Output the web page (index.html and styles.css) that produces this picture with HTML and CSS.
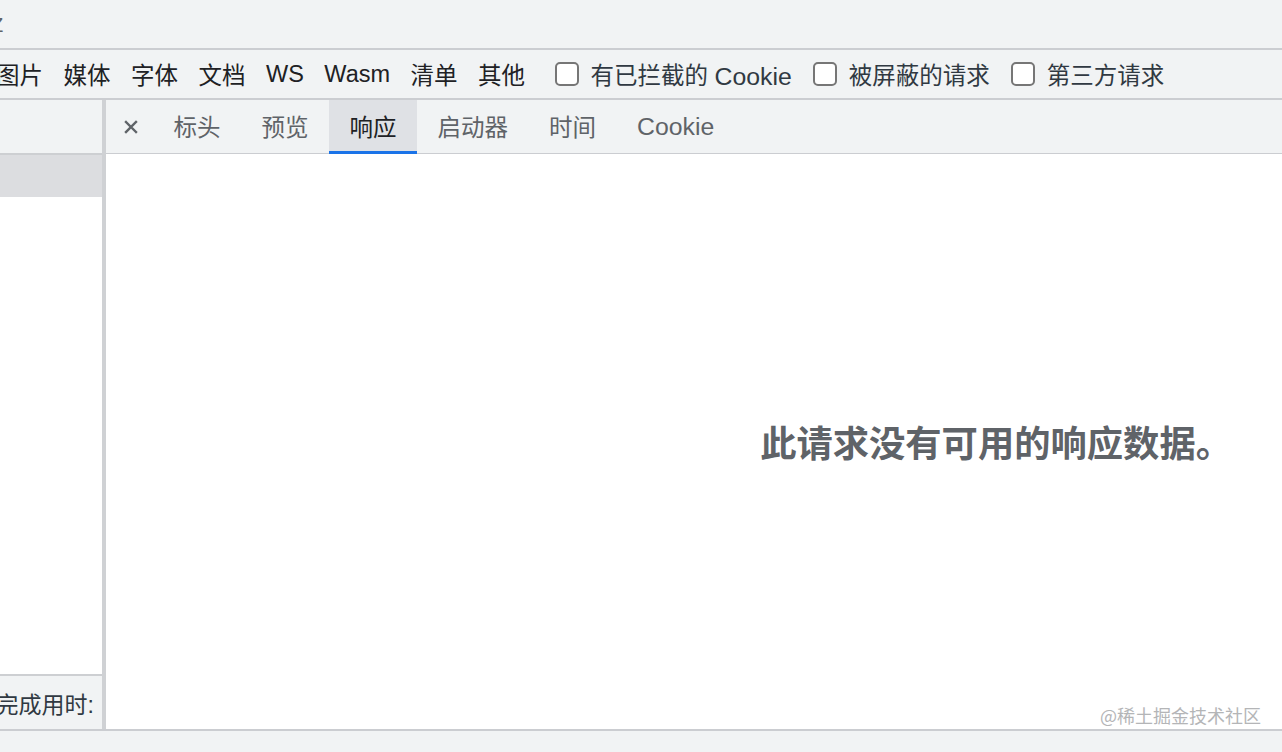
FILE: index.html
```html
<!DOCTYPE html>
<html lang="zh-CN">
<head>
<meta charset="utf-8">
<title>Network</title>
<link rel="stylesheet" href="styles.css">
</head>
<body>
<div class="topbar"><span class="cut">Z</span></div>
<div class="filters">
  <span class="f first">图片</span>
  <span class="f">媒体</span>
  <span class="f">字体</span>
  <span class="f">文档</span>
  <span class="f">WS</span>
  <span class="f">Wasm</span>
  <span class="f">清单</span>
  <span class="f">其他</span>
  <label class="chk"><span class="box"></span><span>有已拦截的 <span class="lat">Cookie</span></span></label>
  <label class="chk"><span class="box"></span><span>被屏蔽的请求</span></label>
  <label class="chk"><span class="box"></span><span>第三方请求</span></label>
</div>
<div class="main">
  <div class="left">
    <div class="left-head"></div>
    <div class="left-sel"></div>
    <div class="left-body"></div>
    <div class="left-foot"><span>完成用时:</span></div>
  </div>
  <div class="right">
    <div class="tabs">
      <span class="close">
        <svg width="14" height="14" viewBox="0 0 14 14"><path d="M2 2L12 12M12 2L2 12" stroke="#5f6368" stroke-width="2.4" stroke-linecap="square"/></svg>
      </span>
      <span class="tab">标头</span>
      <span class="tab">预览</span>
      <span class="tab active">响应</span>
      <span class="tab">启动器</span>
      <span class="tab">时间</span>
      <span class="tab"><span class="lat">Cookie</span></span>
    </div>
    <div class="content">
      <div class="msg">此请求没有可用的响应数据。</div>
      <div class="mark">@稀土掘金技术社区</div>
    </div>
  </div>
</div>
<div class="bottombar"></div>
</body>
</html>
```
FILE: styles.css
```css
html, body {
  margin: 0;
  padding: 0;
}
body {
  width: 1282px;
  height: 752px;
  overflow: hidden;
  background: #f1f3f4;
  font-family: "Liberation Sans", "Noto Sans CJK SC", sans-serif;
  color: #303942;
}
.topbar {
  height: 48px;
  border-bottom: 2px solid #cbcdd1;
  display: flex;
  align-items: center;
  overflow: hidden;
}
.cut {
  font-size: 20px;
  color: #5f6368;
  margin-left: -9px;
  margin-top: 2px;
}
.filters {
  height: 48px;
  border-bottom: 2px solid #cbcdd1;
  display: flex;
  align-items: center;
  font-size: 23.5px;
  white-space: nowrap;
  overflow: hidden;
}
.f {
  margin-right: 20.5px;
  color: #202124;
}
.f.first {
  margin-left: -4px;
}
.lat {
  font-size: 24.8px;
  position: relative;
  top: 1px;
}
.chk {
  display: flex;
  align-items: center;
  margin-left: 9px;
  margin-right: 12px;
  color: #303942;
}
.box {
  width: 20px;
  height: 20px;
  border: 2px solid #767676;
  border-radius: 5px;
  background: #fff;
  margin-right: 12px;
}
.main {
  display: flex;
  height: 629px;
  border-bottom: 2px solid #cbcdd1;
}
.left {
  width: 102px;
  border-right: 4px solid #cfd1d4;
  display: flex;
  flex-direction: column;
  background: #fff;
}
.left-head {
  height: 53px;
  background: #f1f3f4;
  border-bottom: 2px solid #cdcfd2;
}
.left-sel {
  height: 42px;
  background: #dcdde0;
}
.left-body {
  flex: 1;
}
.left-foot {
  height: 53px;
  border-top: 2px solid #cdcfd2;
  background: #f1f3f4;
  display: flex;
  align-items: center;
  justify-content: flex-end;
  font-size: 23px;
  color: #303942;
  white-space: nowrap;
  overflow: hidden;
  padding-right: 8px;
}
.right {
  flex: 1;
  display: flex;
  flex-direction: column;
}
.tabs {
  height: 53px;
  border-bottom: 1px solid #cbcdd1;
  display: flex;
  align-items: stretch;
  font-size: 23.5px;
  color: #5f6368;
}
.close {
  display: flex;
  align-items: center;
  padding: 0 15px 0 18px;
}
.close svg {
  display: block;
}
.tab {
  display: flex;
  align-items: center;
  padding: 0 20.5px;
  border-bottom: 3px solid transparent;
  margin-bottom: -1px;
}
.tab.active {
  background: #dfe1e5;
  color: #202124;
  border-bottom-color: #1a73e8;
}
.content {
  flex: 1;
  background: #fff;
  position: relative;
  display: flex;
  align-items: center;
  justify-content: flex-end;
  padding-right: 50px;
}
.msg {
  font-size: 36.3px;
  font-weight: bold;
  color: #5f6368;
  font-family: "Noto Sans CJK SC", sans-serif;
  margin-top: -2px;
}
.mark {
  position: absolute;
  right: 21px;
  bottom: 1px;
  font-size: 18px;
  color: #b4b5b7;
  font-family: "Noto Sans CJK SC", sans-serif;
}
.bottombar {
  height: 21px;
}
```
